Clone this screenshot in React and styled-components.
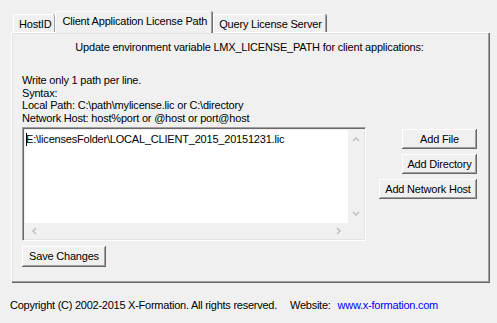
import styled, { createGlobalStyle } from "styled-components"

const Global = createGlobalStyle`
  html, body {
    margin: 0;
    padding: 0;
    background: #f0f0f0;
  }
  body {
    font-family: "Liberation Sans", Arial, sans-serif;
    font-size: 11px;
    letter-spacing: -0.2px;
    color: #000;
  }
`

const Window = styled.div`
  width: 497px;
  height: 323px;
  box-sizing: border-box;
  padding: 11px 8px 0 11px;
  background: #f0f0f0;
`

const TabStrip = styled.div`
  display: flex;
  align-items: flex-end;
  height: 21px;
  padding-left: 2px;
  position: relative;
  z-index: 1;
`

const Tab = styled.div`
  box-sizing: border-box;
  height: ${p => (p.$active ? "22px" : "18px")};
  padding: ${p => (p.$active ? "2px 5px 0 6px" : "2px 4px 0 5px")};
  margin-left: ${p => (p.$active ? "-1px" : "0")};
  margin-bottom: ${p => (p.$active ? "-1px" : "0")};
  margin-right: 1px;
  background: #f0f0f0;
  border-top: 1px solid #fff;
  border-left: 1px solid #fff;
  box-shadow: inset -1px 0 #a0a0a0, 1px 0 #696969;
  border-radius: 2px 2px 0 0;
  line-height: 15px;
  white-space: nowrap;
`

const Panel = styled.div`
  box-sizing: border-box;
  width: 478px;
  height: 250px;
  border-top: 1px solid #fff;
  border-left: 1px solid #fff;
  box-shadow: inset -1px -1px #a0a0a0, 1px 1px #696969, inset 1px 1px #e3e3e3;
  padding: 8px 12px 0 10px;
  display: flex;
  flex-direction: column;
`

const Heading = styled.div`
  text-align: center;
  line-height: 13px;
`

const Notes = styled.div`
  margin-top: 20px;
  line-height: 12.5px;
`

const EditRow = styled.div`
  display: flex;
  justify-content: space-between;
  align-items: flex-start;
  margin-top: 3px;
`

const EditBox = styled.div`
  box-sizing: border-box;
  width: 344px;
  height: 114px;
  border-top: 1px solid #a0a0a0;
  border-left: 1px solid #a0a0a0;
  border-right: 1px solid #fff;
  border-bottom: 1px solid #fff;
  box-shadow: inset 1px 1px #696969, inset -1px -1px #e3e3e3;
  display: grid;
  grid-template-columns: 1fr 16px;
  grid-template-rows: 1fr 16px;
  padding: 2px 1px 1px 2px;
`

const EditText = styled.div`
  background: #fff;
  padding: 3px 0 0 1px;
  line-height: 13px;
  white-space: nowrap;
  overflow: hidden;
  position: relative;
`

const Caret = styled.span`
  position: absolute;
  left: 1px;
  top: 3px;
  width: 1px;
  height: 13px;
  background: #000;
`

const ScrollBar = styled.div`
  background: #f0f0f0;
  display: flex;
  flex-direction: ${p => (p.$vertical ? "column" : "row")};
  justify-content: space-between;
  align-items: center;
  padding: ${p => (p.$vertical ? "6px 0" : "0 6px")};
`

const Corner = styled.div`
  background: #f0f0f0;
`

const ButtonColumn = styled.div`
  display: flex;
  flex-direction: column;
  align-items: flex-end;
  gap: 5px;
  padding-top: 2px;
`

const Button = styled.button`
  box-sizing: border-box;
  min-width: ${p => p.$minWidth || 75}px;
  height: ${p => p.$height || 20}px;
  padding: 0 5px 1px;
  background: #f0f0f0;
  border: none;
  box-shadow: inset -1px -1px #696969, inset 1px 1px #fff, inset -2px -2px #a0a0a0;
  font-family: "Liberation Sans", Arial, sans-serif;
  font-size: 11px;
  letter-spacing: -0.2px;
  color: #000;
  white-space: nowrap;
  border-radius: 0;
`

const SaveRow = styled.div`
  margin-top: 5px;
`

const Footer = styled.div`
  display: flex;
  align-items: center;
  padding: 17px 0 0 0;
  margin-left: -1px;
  line-height: 13px;
  letter-spacing: -0.25px;
`

const Website = styled.span`
  margin-left: 13px;
`

const Link = styled.a`
  margin-left: 7px;
  color: #0000ff;
  text-decoration: none;
`

const Chevron = ({ dir }) => {
  const pts = {
    up: "1,5 4,2 7,5",
    down: "1,2 4,5 7,2",
    left: "5,1 2,4 5,7",
    right: "2,1 5,4 2,7",
  }[dir]
  const w = dir === "up" || dir === "down" ? 8 : 7
  const h = dir === "up" || dir === "down" ? 7 : 8
  return (
    <svg width={w} height={h} viewBox={`0 0 ${w} ${h}`}>
      <polyline points={pts} fill="none" stroke="#bfbfbf" strokeWidth="1.5" />
    </svg>
  )
}

const App = () => {
  return (
    <Window>
      <Global />
      <TabStrip>
        <Tab>HostID</Tab>
        <Tab $active>Client Application License Path</Tab>
        <Tab>Query License Server</Tab>
      </TabStrip>
      <Panel>
        <Heading>Update environment variable LMX_LICENSE_PATH for client applications:</Heading>
        <Notes>
          Write only 1 path per line.
          <br />
          Syntax:
          <br />
          Local Path: C:\path\mylicense.lic or C:\directory
          <br />
          Network Host: host%port or @host or port@host
        </Notes>
        <EditRow>
          <EditBox>
            <EditText>
              <Caret />
              E:\licensesFolder\LOCAL_CLIENT_2015_20151231.lic
            </EditText>
            <ScrollBar $vertical>
              <Chevron dir="up" />
              <Chevron dir="down" />
            </ScrollBar>
            <ScrollBar>
              <Chevron dir="left" />
              <Chevron dir="right" />
            </ScrollBar>
            <Corner />
          </EditBox>
          <ButtonColumn>
            <Button>Add File</Button>
            <Button>Add Directory</Button>
            <Button $minWidth={98}>Add Network Host</Button>
          </ButtonColumn>
        </EditRow>
        <SaveRow>
          <Button $minWidth={84} $height={21}>Save Changes</Button>
        </SaveRow>
      </Panel>
      <Footer>
        <span>Copyright (C) 2002-2015 X-Formation. All rights reserved.</span>
        <Website>Website:</Website>
        <Link href="#">www.x-formation.com</Link>
      </Footer>
    </Window>
  )
}

export default App
